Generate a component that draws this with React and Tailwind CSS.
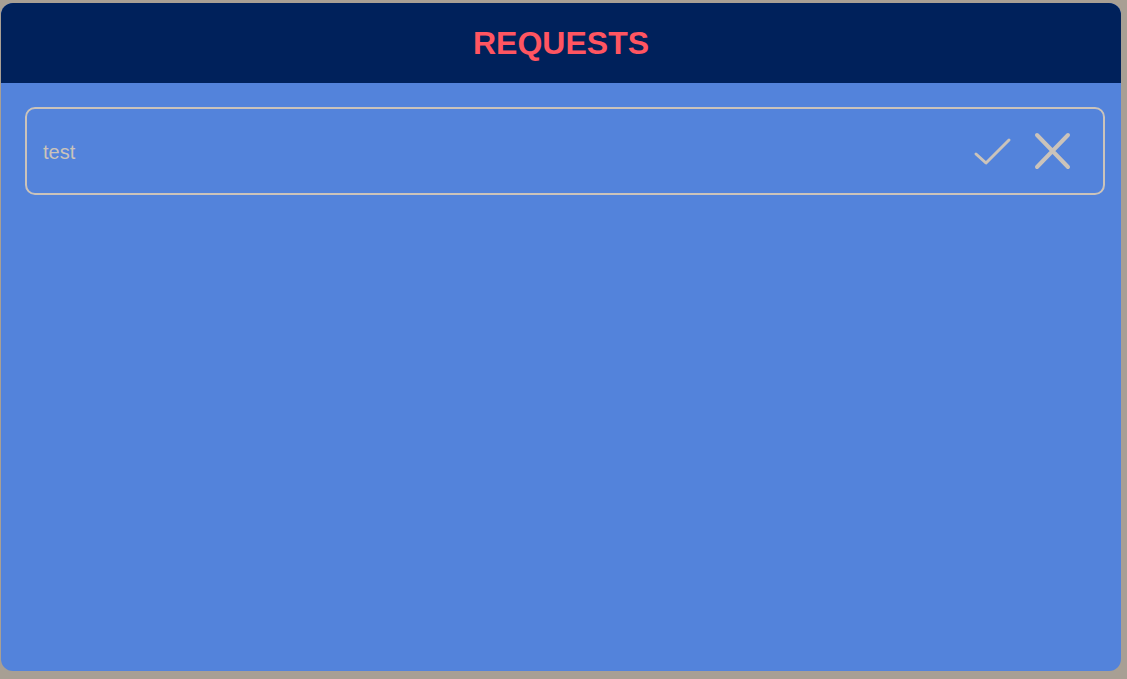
export default function App() {
  return (
    <div className="w-[1127px] h-[679px] bg-[#a89f94] pt-[3px] pl-[1px] font-['Liberation_Sans',Arial,sans-serif]">
      <div className="w-[1120px] h-[668px] rounded-xl overflow-hidden bg-[#5383db] flex flex-col">
        {/* Header */}
        <div className="h-20 bg-[#00215b] flex items-center justify-center">
          <h1 className="text-[32px] font-bold text-[#ff5561] leading-none">REQUESTS</h1>
        </div>

        {/* Request list */}
        <div className="flex-1 pt-6 pl-6 pr-4">
          <div className="h-[88px] border-2 border-[#cbc3ba] rounded-[10px] flex items-center pl-4 pr-[31px]">
            <span className="text-xl text-[#cbc3ba] mt-[2px]">test</span>
            <div className="ml-auto flex items-center gap-5 mt-[1px]">
              <button className="w-10 h-10">
                <svg viewBox="0 0 40 40" className="w-10 h-10" fill="none" stroke="#cbc3ba" strokeWidth="3" strokeLinecap="round" strokeLinejoin="round">
                  <path d="M4 22 L14 31 L37 8" />
                </svg>
              </button>
              <button className="w-10 h-10">
                <svg viewBox="0 0 40 40" className="w-10 h-10" fill="none" stroke="#cbc3ba" strokeWidth="4" strokeLinecap="round">
                  <path d="M5 3 L36 35 M36 3 L5 35" />
                </svg>
              </button>
            </div>
          </div>
        </div>
      </div>
    </div>
  );
}
